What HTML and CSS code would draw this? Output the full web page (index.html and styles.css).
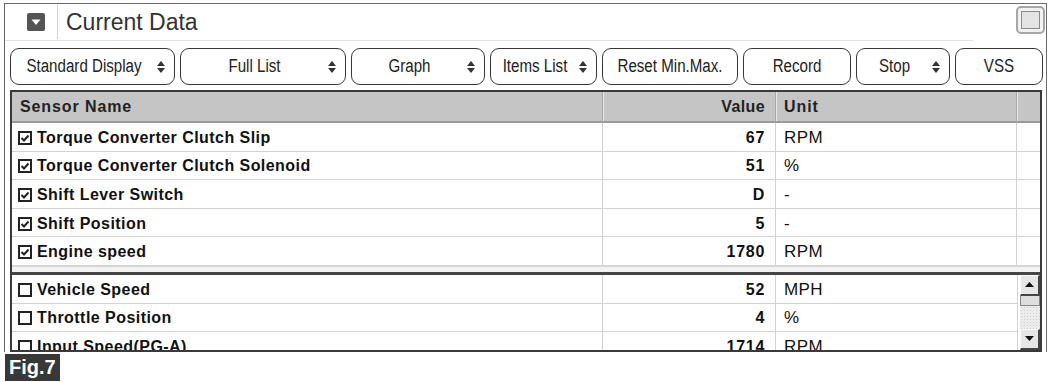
FILE: index.html
```html
<!DOCTYPE html>
<html>
<head>
<meta charset="utf-8">
<link rel="stylesheet" href="styles.css">
</head>
<body>
<div class="window">
  <div class="titlebar">
    <span class="collapse"><svg width="18" height="18" viewBox="0 0 18 18"><rect x="0" y="0" width="18" height="18" rx="2" fill="#555"/><polygon points="4.5,6.5 13.5,6.5 9,12" fill="#fff"/></svg></span>
    <span class="tsep"></span>
    <span class="title">Current Data</span>
    <span class="maxbtn"><span class="maxin"></span></span>
  </div>
  <div class="toolbar">
    <div class="btn w1"><span class="lbl">Standard Display</span><svg class="dd" width="8" height="14" viewBox="0 0 8 14"><polygon points="0,6 4,1 8,6" fill="#333"/><polygon points="0,8 4,13 8,8" fill="#333"/></svg></div>
    <div class="btn w2"><span class="lbl">Full List</span><svg class="dd" width="8" height="14" viewBox="0 0 8 14"><polygon points="0,6 4,1 8,6" fill="#333"/><polygon points="0,8 4,13 8,8" fill="#333"/></svg></div>
    <div class="btn w3"><span class="lbl">Graph</span><svg class="dd" width="8" height="14" viewBox="0 0 8 14"><polygon points="0,6 4,1 8,6" fill="#333"/><polygon points="0,8 4,13 8,8" fill="#333"/></svg></div>
    <div class="btn w4"><span class="lbl">Items List</span><svg class="dd" width="8" height="14" viewBox="0 0 8 14"><polygon points="0,6 4,1 8,6" fill="#333"/><polygon points="0,8 4,13 8,8" fill="#333"/></svg></div>
    <div class="btn w5"><span class="lbl">Reset Min.Max.</span></div>
    <div class="btn w6"><span class="lbl">Record</span></div>
    <div class="btn w7"><span class="lbl">Stop</span><svg class="dd" width="8" height="14" viewBox="0 0 8 14"><polygon points="0,6 4,1 8,6" fill="#333"/><polygon points="0,8 4,13 8,8" fill="#333"/></svg></div>
    <div class="btn w8"><span class="lbl">VSS</span></div>
  </div>
  <div class="grid">
    <div class="row head">
      <div class="c c1">Sensor Name</div>
      <div class="c c2">Value</div>
      <div class="c c3">Unit</div>
      <div class="c c4"></div>
    </div>
    <div class="group">
      <div class="row"><div class="c c1"><svg class="cb" width="14" height="14" viewBox="0 0 14 14"><rect x="1" y="1" width="12" height="12" fill="#fff" stroke="#222" stroke-width="2"/><path d="M3.5 7 L6 9.5 L10.5 4.5" fill="none" stroke="#222" stroke-width="2"/></svg>Torque Converter Clutch Slip</div><div class="c c2">67</div><div class="c c3">RPM</div><div class="c c4"></div></div>
      <div class="row"><div class="c c1"><svg class="cb" width="14" height="14" viewBox="0 0 14 14"><rect x="1" y="1" width="12" height="12" fill="#fff" stroke="#222" stroke-width="2"/><path d="M3.5 7 L6 9.5 L10.5 4.5" fill="none" stroke="#222" stroke-width="2"/></svg>Torque Converter Clutch Solenoid</div><div class="c c2">51</div><div class="c c3">%</div><div class="c c4"></div></div>
      <div class="row"><div class="c c1"><svg class="cb" width="14" height="14" viewBox="0 0 14 14"><rect x="1" y="1" width="12" height="12" fill="#fff" stroke="#222" stroke-width="2"/><path d="M3.5 7 L6 9.5 L10.5 4.5" fill="none" stroke="#222" stroke-width="2"/></svg>Shift Lever Switch</div><div class="c c2">D</div><div class="c c3">-</div><div class="c c4"></div></div>
      <div class="row"><div class="c c1"><svg class="cb" width="14" height="14" viewBox="0 0 14 14"><rect x="1" y="1" width="12" height="12" fill="#fff" stroke="#222" stroke-width="2"/><path d="M3.5 7 L6 9.5 L10.5 4.5" fill="none" stroke="#222" stroke-width="2"/></svg>Shift Position</div><div class="c c2">5</div><div class="c c3">-</div><div class="c c4"></div></div>
      <div class="row"><div class="c c1"><svg class="cb" width="14" height="14" viewBox="0 0 14 14"><rect x="1" y="1" width="12" height="12" fill="#fff" stroke="#222" stroke-width="2"/><path d="M3.5 7 L6 9.5 L10.5 4.5" fill="none" stroke="#222" stroke-width="2"/></svg>Engine speed</div><div class="c c2">1780</div><div class="c c3">RPM</div><div class="c c4"></div></div>
    </div>
    <div class="divider"></div>
    <div class="group2">
      <div class="rows2">
        <div class="row r2"><div class="c c1"><svg class="cb" width="14" height="14" viewBox="0 0 14 14"><rect x="1" y="1" width="12" height="12" fill="#fff" stroke="#222" stroke-width="2"/></svg>Vehicle Speed</div><div class="c c2">52</div><div class="c c3">MPH</div></div>
        <div class="row r2"><div class="c c1"><svg class="cb" width="14" height="14" viewBox="0 0 14 14"><rect x="1" y="1" width="12" height="12" fill="#fff" stroke="#222" stroke-width="2"/></svg>Throttle Position</div><div class="c c2">4</div><div class="c c3">%</div></div>
        <div class="row r2"><div class="c c1"><svg class="cb" width="14" height="14" viewBox="0 0 14 14"><rect x="1" y="1" width="12" height="12" fill="#fff" stroke="#222" stroke-width="2"/></svg>Input Speed(PG-A)</div><div class="c c2">1714</div><div class="c c3">RPM</div></div>
      </div>
      <div class="scroll">
        <div class="sbtn"><svg width="9" height="5" viewBox="0 0 9 5"><polygon points="0,5 4.5,0 9,5" fill="#111"/></svg></div>
        <div class="thumb"></div>
        <div class="track"></div>
        <div class="sbtn"><svg width="9" height="5" viewBox="0 0 9 5"><polygon points="0,0 4.5,5 9,0" fill="#111"/></svg></div>
      </div>
    </div>
  </div>
</div>
<div class="fig">Fig.7</div>
</body>
</html>
```

FILE: styles.css
```css
* { box-sizing: border-box; }
html, body { margin: 0; padding: 0; background: #fff; }
body { font-family: "Liberation Sans", Arial, sans-serif; color: #111; }

.window {
  margin: 3px 0 0 4px;
  width: 1043px;
  border: 1px solid #6a6a6a;
  border-bottom: none;
}

.titlebar {
  height: 37px;
  display: flex;
  align-items: center;
  position: relative;
  border-bottom: 1px solid #e2e2e2;
  margin-right: 73px;
}
.collapse { width: 18px; height: 18px; margin-left: 22px; display: flex; }
.tsep { width: 1px; height: 34px; background: #d4d4d4; margin-left: 12px; }
.title { font-size: 23px; color: #333; margin-left: 8px; padding-top: 1px; }
.maxbtn {
  position: absolute;
  right: -72px;
  top: 2px;
  width: 29px;
  height: 28px;
  border: 2px solid #a6a6a6;
  border-radius: 5px;
  background: #f2f2f2;
  display: flex;
  align-items: center;
  justify-content: center;
}
.maxin { width: 19px; height: 18px; border: 1px solid #8a8a8a; background: #e4e4e4; }

.toolbar {
  display: flex;
  gap: 5px;
  padding: 7px 0 0 5px;
  height: 48px;
}
.btn {
  height: 37px;
  border: 1.6px solid #383838;
  border-radius: 9px;
  display: flex;
  align-items: center;
  background: #fff;
}
.lbl {
  flex: 1;
  text-align: center;
  font-size: 18px;
  color: #222;
  white-space: nowrap;
  transform: scaleX(0.84);
}
.dd { margin-right: 9px; flex: none; }
.w1 { width: 165px; }
.w2 { width: 166px; }
.w3 { width: 134px; }
.w4 { width: 107px; }
.w5 { width: 136px; }
.w6 { width: 108px; }
.w7 { width: 94px; }
.w8 { width: 88px; }

.grid {
  margin: 1px 0 0 5px;
  width: 1032px;
  border: 2px solid #3a3a3a;
}
.row {
  display: grid;
  grid-template-columns: 591px 173px 241px 23px;
  height: 28.6px;
}
.c {
  border-right: 1px solid #d2d2d2;
  border-bottom: 1px solid #d2d2d2;
  display: flex;
  align-items: center;
  padding-top: 2px;
  font-size: 16px;
  letter-spacing: 0.45px;
  white-space: nowrap;
  overflow: hidden;
}
.c4 { border-right: none; }
.c1 { padding-left: 6px; font-weight: bold; color: #111; }
.c2 { justify-content: flex-end; padding-right: 10px; font-weight: bold; letter-spacing: 0.7px; }
.c3 { padding-left: 8px; color: #111; font-size: 17px; letter-spacing: 0.4px; }
.cb { margin-right: 5px; flex: none; }

.head { height: 31px; background: #c5c5c5; }
.head .c {
  border-bottom: 2px solid #9a9a9a;
  border-right: 1px solid #a8a8a8;
  box-shadow: inset 1px 0 0 #e8e8e8;
  font-weight: bold;
  color: #222;
  font-size: 16px;
  letter-spacing: 0.9px;
  padding-top: 0;
}
.head .c1 { padding-left: 8px; box-shadow: none; }
.head .c2 { letter-spacing: 0.4px; }
.head .c4 { border-right: none; }

.divider {
  height: 9px;
  background: #f2f2f2;
  border-bottom: 3px solid #454545;
  border-top: 1px solid #d8d8d8;
}

.group2 { display: flex; height: 75px; overflow: hidden; }
.rows2 { width: 1005px; }
.r2 { grid-template-columns: 591px 173px 241px; }
.r2 .c3 { border-right: none; }

.scroll {
  width: 23px;
  display: flex;
  flex-direction: column;
  border-left: 1px solid #d2d2d2;
  padding-left: 2px;
}
.sbtn {
  height: 21px;
  background: #e6e6e6;
  border-top: 1px solid #fafafa;
  border-left: 1px solid #fafafa;
  border-right: 2px solid #444;
  border-bottom: 2px solid #444;
  display: flex;
  align-items: center;
  justify-content: center;
  flex: none;
}
.thumb {
  height: 10px;
  background: #dedede;
  border: 1px solid #888;
  border-top: none;
  flex: none;
}
.track {
  flex: 1;
  background-color: #ececec;
  background-image: radial-gradient(#cfcfcf 0.8px, transparent 0.9px);
  background-size: 3px 3px;
}

.fig {
  margin: 2px 0 0 5px;
  width: 55px;
  height: 27px;
  background: #383838;
  color: #fff;
  font-weight: bold;
  font-size: 20px;
  line-height: 27px;
  padding-left: 4px;
}
```
